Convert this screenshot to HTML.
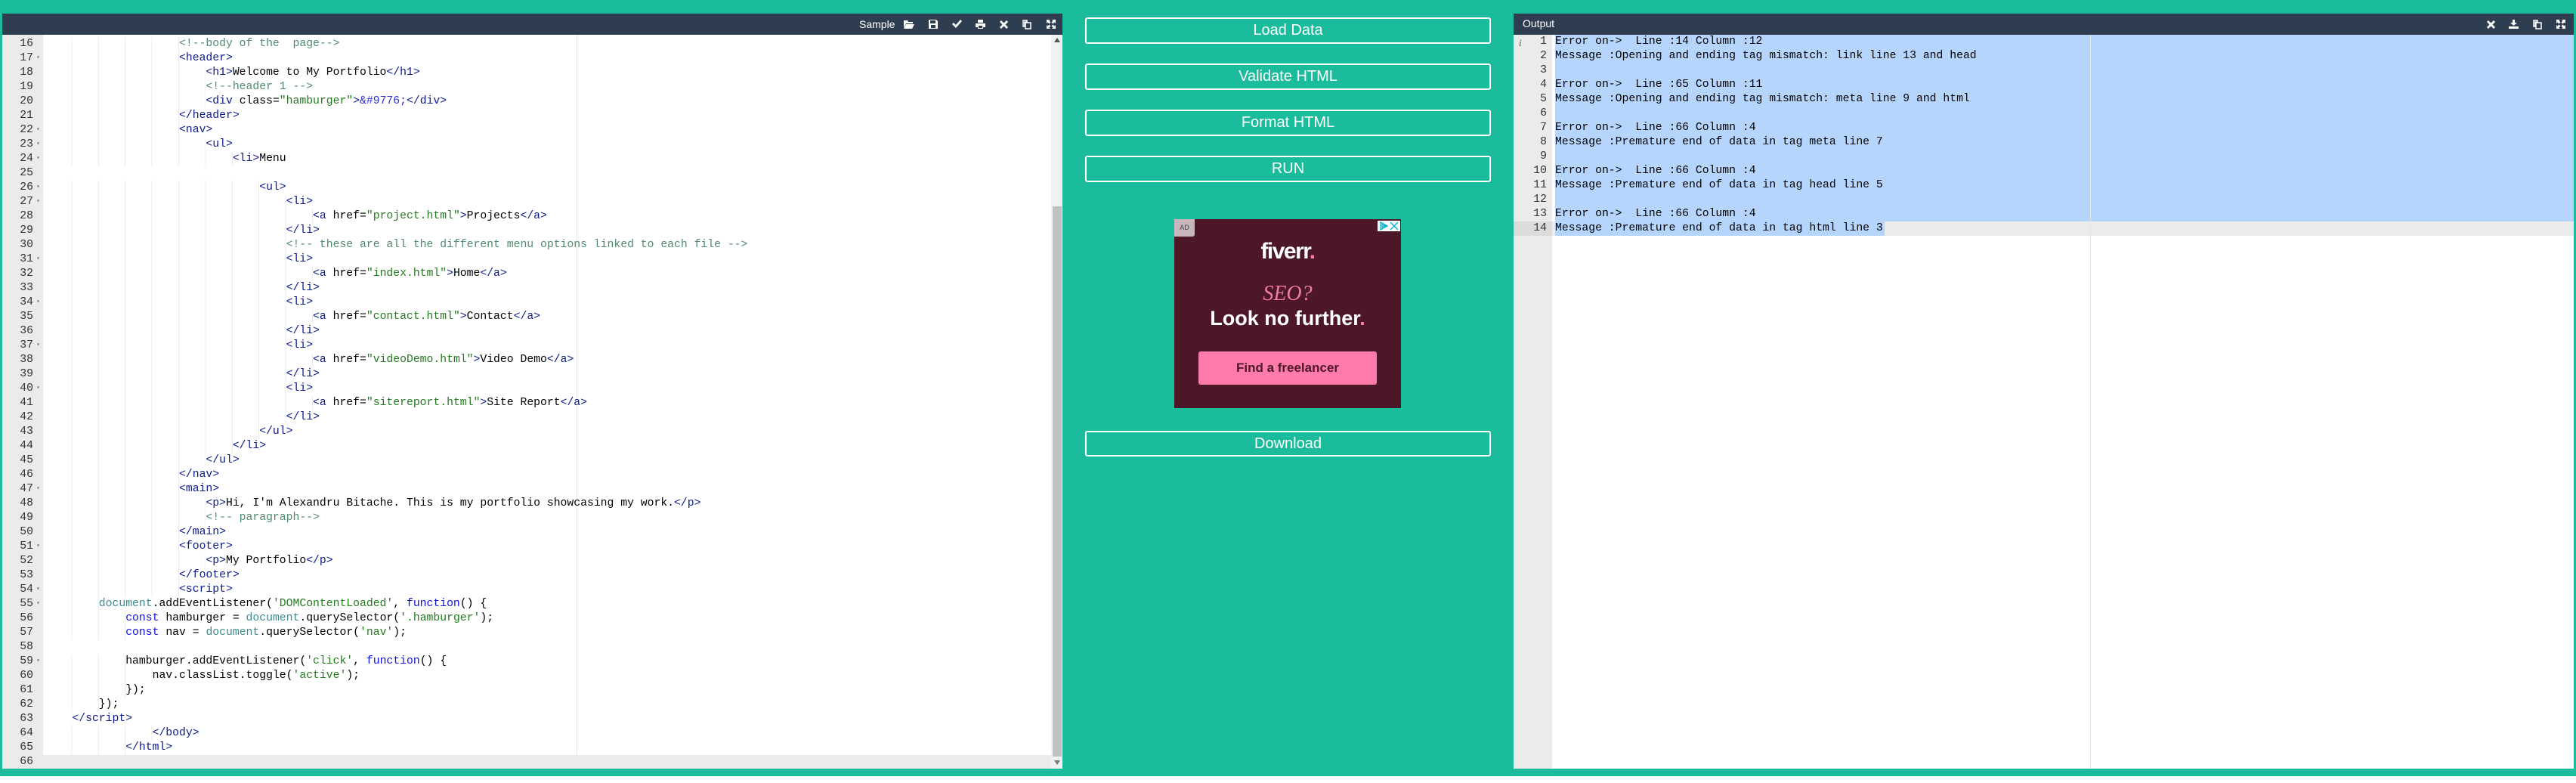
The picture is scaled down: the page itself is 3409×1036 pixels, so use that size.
<!DOCTYPE html>
<html><head><meta charset="utf-8">
<style>
*{margin:0;padding:0;box-sizing:border-box}
html,body{width:3409px;height:1036px;overflow:hidden;background:#fff}
#teal{position:absolute;left:0;top:0;width:3409px;height:1027px;background:#1abc9c}
.panel{position:absolute;top:18px;height:999px;background:#fff;overflow:hidden}
.hdr{position:absolute;left:0;top:0;right:0;height:28px;background:#2e3e50;color:#fff;font:14px "Liberation Sans",sans-serif}
.gut{position:absolute;left:0;top:28px;bottom:0;background:#ebebeb}
.code{position:absolute;top:28px;bottom:0;right:0;overflow:hidden;font:14.75px/19px "Liberation Mono",monospace;color:#000}
.ln{height:19px;white-space:pre;position:relative}
.gl{height:19px;font:14.75px/19px "Liberation Mono",monospace;color:#333;text-align:right;position:relative}
.ind{display:inline-block;height:19px;vertical-align:top;background:repeating-linear-gradient(to right,transparent 0,transparent calc(4ch - 1px),#ececec calc(4ch - 1px),#ececec 4ch)}
.t{color:#0a1a8a}.c{color:#4f8a6d}.s{color:#237a1e}.e{color:#3030d0}.k{color:#1010e0}.d{color:#3c8a8f}
.btn{position:absolute;left:1436px;width:537px;height:35px;border:2px solid #fff;border-radius:3px;color:#fff;font:20px/31px "Liberation Sans",sans-serif;text-align:center}
.ico{position:absolute;top:8px}
</style></head><body>
<div id="teal"></div>

<div class="panel" style="left:3px;width:1403px">
 <div class="hdr">
  <span style="position:absolute;left:1134px;top:6px">Sample</span>
  <svg class="ico" style="left:1193px" width="14" height="12" viewBox="0 0 14 12"><path d="M0 1h5l1 2h6v2H3L0 11z M3 6h11l-3 6H0z" fill="#fff"/></svg>
  <svg class="ico" style="left:1226px" width="12" height="12" viewBox="0 0 12 12"><path d="M0 0h10l2 2v10H0z M2 1v4h7V1z M3 7v4h6V7z" fill="#fff" fill-rule="evenodd"/></svg>
  <svg class="ico" style="left:1257px" width="13" height="12" viewBox="0 0 13 12"><path d="M0 6l2-2 3 3 6-7 2 2-8 9z" fill="#fff"/></svg>
  <svg class="ico" style="left:1288px" width="13" height="12" viewBox="0 0 13 12"><path d="M3 0h7v4H3z M0 5h13v5h-3v2H3v-2H0z M4 8v3h5V8z" fill="#fff" fill-rule="evenodd"/></svg>
  <svg class="ico" style="left:1320px" width="11" height="12" viewBox="0 0 11 12"><path d="M2 1l3.5 3.5L9 1l2 2-3.5 3.5L11 10l-2 2-3.5-3.5L2 12 0 10l3.5-3.5L0 3z" fill="#fff"/></svg>
  <svg class="ico" style="left:1350px" width="12" height="13" viewBox="0 0 12 13"><path d="M1 1h5v2H3v6H1z M4 4h7v8H4z" fill="none" stroke="#fff" stroke-width="1.5"/></svg>
  <svg class="ico" style="left:1382px" width="12" height="12" viewBox="0 0 12 12"><path d="M0 0h5L3.5 1.5 5.5 3.5 3.5 5.5 1.5 3.5 0 5z M12 0v5l-1.5-1.5-2 2-2-2 2-2L7 0z M0 12V7l1.5 1.5 2-2 2 2-2 2L5 12z M12 12H7l1.5-1.5-2-2 2-2 2 2L12 7z" fill="#fff"/></svg>
 </div>
 <div class="gut" style="width:54px">
  <div style="position:absolute;top:3px;left:0;width:54px" id="gn"></div>
 </div>
 <div class="code" style="left:54px;right:15px">
  <div style="position:absolute;left:706px;top:0;bottom:0;width:1px;background:#e8e8e8"></div>
  <div style="position:absolute;left:0;right:0;top:953px;height:19px;background:#ebebeb"></div>
  <div style="position:absolute;left:3px;top:3px;right:0" id="cl"></div>
 </div>
 <div style="position:absolute;right:0;top:28px;bottom:0;width:15px;background:#f1f1f1">
  <div style="position:absolute;left:4px;top:4px;border-left:4px solid transparent;border-right:4px solid transparent;border-bottom:6px solid #555"></div>
  <div style="position:absolute;left:2px;right:1px;top:227px;bottom:16px;background:#c1c1c1"></div>
  <div style="position:absolute;left:4px;bottom:5px;border-left:4px solid transparent;border-right:4px solid transparent;border-top:6px solid #777"></div>
 </div>
</div>

<div class="btn" style="top:23px">Load Data</div>
<div class="btn" style="top:84px">Validate HTML</div>
<div class="btn" style="top:145px">Format HTML</div>
<div class="btn" style="top:206px">RUN</div>
<div class="btn" style="top:570px;height:34px">Download</div>

<div style="position:absolute;left:1554px;top:290px;width:300px;height:250px;background:#4c1727;font-family:'Liberation Sans',sans-serif;overflow:hidden">
 <div style="position:absolute;left:0;top:0;width:27px;height:23px;background:#c9b6bc;border-bottom-right-radius:3px;color:#444;font-size:9px;line-height:23px;text-align:center">AD</div>
 <div style="position:absolute;right:1px;top:2px;width:30px;height:14px;background:#fff"></div>
 <svg style="position:absolute;right:17px;top:3px" width="12" height="12" viewBox="0 0 12 12"><path d="M2 1v10l9-5z M4 4v4l4-2z" fill="none" stroke="#00aecd" stroke-width="1.3"/></svg>
 <svg style="position:absolute;right:3px;top:3px" width="12" height="12" viewBox="0 0 12 12"><path d="M1 1l10 10M11 1L1 11" stroke="#00aecd" stroke-width="1.3"/></svg>
 <div style="position:absolute;left:0;right:0;top:26px;text-align:center;color:#fff;font:bold 30px/34px 'Liberation Sans',sans-serif;letter-spacing:-1.5px">fiverr<span style="color:#ff7bac">.</span></div>
 <div style="position:absolute;left:0;right:0;top:83px;text-align:center;color:#f27aa8;font:italic 28px/32px 'Liberation Serif',serif">SEO?</div>
 <div style="position:absolute;left:0;right:0;top:115px;text-align:center;color:#fff;font:bold 27px/32px 'Liberation Sans',sans-serif">Look no further<span style="color:#ff7bac">.</span></div>
 <div style="position:absolute;left:32px;top:175px;width:236px;height:44px;background:#ff7bac;border-radius:3px;color:#4c1727;font:bold 17px/44px 'Liberation Sans',sans-serif;text-align:center">Find a freelancer</div>
</div>

<div class="panel" style="left:2003px;width:1403px">
 <div class="hdr">
  <span style="position:absolute;left:12px;top:5px">Output</span>
  <svg class="ico" style="left:1288px" width="11" height="12" viewBox="0 0 11 12"><path d="M2 1l3.5 3.5L9 1l2 2-3.5 3.5L11 10l-2 2-3.5-3.5L2 12 0 10l3.5-3.5L0 3z" fill="#fff"/></svg>
  <svg class="ico" style="left:1317px" width="13" height="12" viewBox="0 0 13 12"><path d="M5 0h3v4h3L6.5 8 2 4h3z M0 9h13v3H0z" fill="#fff"/></svg>
  <svg class="ico" style="left:1349px" width="12" height="13" viewBox="0 0 12 13"><path d="M1 1h5v2H3v6H1z M4 4h7v8H4z" fill="none" stroke="#fff" stroke-width="1.5"/></svg>
  <svg class="ico" style="left:1380px" width="12" height="12" viewBox="0 0 12 12"><path d="M0 0h5L3.5 1.5 5.5 3.5 3.5 5.5 1.5 3.5 0 5z M12 0v5l-1.5-1.5-2 2-2-2 2-2L7 0z M0 12V7l1.5 1.5 2-2 2 2-2 2L5 12z M12 12H7l1.5-1.5-2-2 2-2 2 2L12 7z" fill="#fff"/></svg>
 </div>
 <div class="gut" style="width:51px">
  <div style="position:absolute;left:0;top:247px;width:51px;height:19px;background:#dcdcdc"></div>
  <div style="position:absolute;left:7px;top:1px;font:italic 13px/19px 'Liberation Serif',serif;color:#555">i</div>
  <div style="position:absolute;top:0;left:0;width:44px" id="on"></div>
 </div>
 <div class="code" style="left:51px">
  <div style="position:absolute;left:0;right:0;top:247px;height:19px;background:#ebebeb"></div>
  <div style="position:absolute;left:4px;right:0;top:0;height:247px;background:#b5d5fd"></div>
  <div style="position:absolute;left:4px;width:436px;top:247px;height:19px;background:#b5d5fd"></div>
  <div style="position:absolute;left:712px;top:0;bottom:0;width:1px;background:#e6e6e6"></div>
  <div style="position:absolute;left:4px;top:0;right:0" id="ol"></div>
 </div>
</div>

<script>
var L=[
[20,'<span class="c">&lt;!--body of the  page--&gt;</span>'],
[20,'<span class="t">&lt;header&gt;</span>',1],
[24,'<span class="t">&lt;h1&gt;</span>Welcome to My Portfolio<span class="t">&lt;/h1&gt;</span>'],
[24,'<span class="c">&lt;!--header 1 --&gt;</span>'],
[24,'<span class="t">&lt;div </span>class=<span class="s">"hamburger"</span><span class="t">&gt;</span><span class="e">&amp;#9776;</span><span class="t">&lt;/div&gt;</span>'],
[20,'<span class="t">&lt;/header&gt;</span>'],
[20,'<span class="t">&lt;nav&gt;</span>',1],
[24,'<span class="t">&lt;ul&gt;</span>',1],
[28,'<span class="t">&lt;li&gt;</span>Menu',1],
[0,''],
[32,'<span class="t">&lt;ul&gt;</span>',1],
[36,'<span class="t">&lt;li&gt;</span>',1],
[40,'<span class="t">&lt;a </span>href=<span class="s">"project.html"</span><span class="t">&gt;</span>Projects<span class="t">&lt;/a&gt;</span>'],
[36,'<span class="t">&lt;/li&gt;</span>'],
[36,'<span class="c">&lt;!-- these are all the different menu options linked to each file --&gt;</span>'],
[36,'<span class="t">&lt;li&gt;</span>',1],
[40,'<span class="t">&lt;a </span>href=<span class="s">"index.html"</span><span class="t">&gt;</span>Home<span class="t">&lt;/a&gt;</span>'],
[36,'<span class="t">&lt;/li&gt;</span>'],
[36,'<span class="t">&lt;li&gt;</span>',1],
[40,'<span class="t">&lt;a </span>href=<span class="s">"contact.html"</span><span class="t">&gt;</span>Contact<span class="t">&lt;/a&gt;</span>'],
[36,'<span class="t">&lt;/li&gt;</span>'],
[36,'<span class="t">&lt;li&gt;</span>',1],
[40,'<span class="t">&lt;a </span>href=<span class="s">"videoDemo.html"</span><span class="t">&gt;</span>Video Demo<span class="t">&lt;/a&gt;</span>'],
[36,'<span class="t">&lt;/li&gt;</span>'],
[36,'<span class="t">&lt;li&gt;</span>',1],
[40,'<span class="t">&lt;a </span>href=<span class="s">"sitereport.html"</span><span class="t">&gt;</span>Site Report<span class="t">&lt;/a&gt;</span>'],
[36,'<span class="t">&lt;/li&gt;</span>'],
[32,'<span class="t">&lt;/ul&gt;</span>'],
[28,'<span class="t">&lt;/li&gt;</span>'],
[24,'<span class="t">&lt;/ul&gt;</span>'],
[20,'<span class="t">&lt;/nav&gt;</span>'],
[20,'<span class="t">&lt;main&gt;</span>',1],
[24,'<span class="t">&lt;p&gt;</span>Hi, I\'m Alexandru Bitache. This is my portfolio showcasing my work.<span class="t">&lt;/p&gt;</span>'],
[24,'<span class="c">&lt;!-- paragraph--&gt;</span>'],
[20,'<span class="t">&lt;/main&gt;</span>'],
[20,'<span class="t">&lt;footer&gt;</span>',1],
[24,'<span class="t">&lt;p&gt;</span>My Portfolio<span class="t">&lt;/p&gt;</span>'],
[20,'<span class="t">&lt;/footer&gt;</span>'],
[20,'<span class="t">&lt;script&gt;</span>',1],
[8,'<span class="d">document</span>.addEventListener(<span class="s">\'DOMContentLoaded\'</span>, <span class="k">function</span>() {',1],
[12,'<span class="k">const</span> hamburger = <span class="d">document</span>.querySelector(<span class="s">\'.hamburger\'</span>);'],
[12,'<span class="k">const</span> nav = <span class="d">document</span>.querySelector(<span class="s">\'nav\'</span>);'],
[0,''],
[12,'hamburger.addEventListener(<span class="s">\'click\'</span>, <span class="k">function</span>() {',1],
[16,'nav.classList.toggle(<span class="s">\'active\'</span>);'],
[12,'});'],
[8,'});'],
[4,'<span class="t">&lt;/script&gt;</span>'],
[16,'<span class="t">&lt;/body&gt;</span>'],
[12,'<span class="t">&lt;/html&gt;</span>'],
[12,'']
];
var g='',c='';
for(var i=0;i<L.length;i++){
 var n=16+i,l=L[i];
 g+='<div class="gl"><span style="position:absolute;right:13px">'+n+'</span>'+(l[2]?'<span style="position:absolute;right:4px;top:-1px;font-size:8px;color:#777">&#9662;</span>':'')+'</div>';
 c+='<div class="ln">'+(l[0]?'<span class="ind" style="width:'+l[0]+'ch"></span>':'')+l[1]+'</div>';
}
document.getElementById('gn').innerHTML=g;
document.getElementById('cl').innerHTML=c;
var O=['Error on->  Line :14 Column :12','Message :Opening and ending tag mismatch: link line 13 and head','',
'Error on->  Line :65 Column :11','Message :Opening and ending tag mismatch: meta line 9 and html','',
'Error on->  Line :66 Column :4','Message :Premature end of data in tag meta line 7','',
'Error on->  Line :66 Column :4','Message :Premature end of data in tag head line 5','',
'Error on->  Line :66 Column :4','Message :Premature end of data in tag html line 3'];
var a='',b='';
for(var j=0;j<O.length;j++){a+='<div class="gl">'+(j+1)+'</div>';b+='<div class="ln">'+O[j]+'</div>';}
document.getElementById('on').innerHTML=a;
document.getElementById('ol').innerHTML=b;
</script>
</body></html>
